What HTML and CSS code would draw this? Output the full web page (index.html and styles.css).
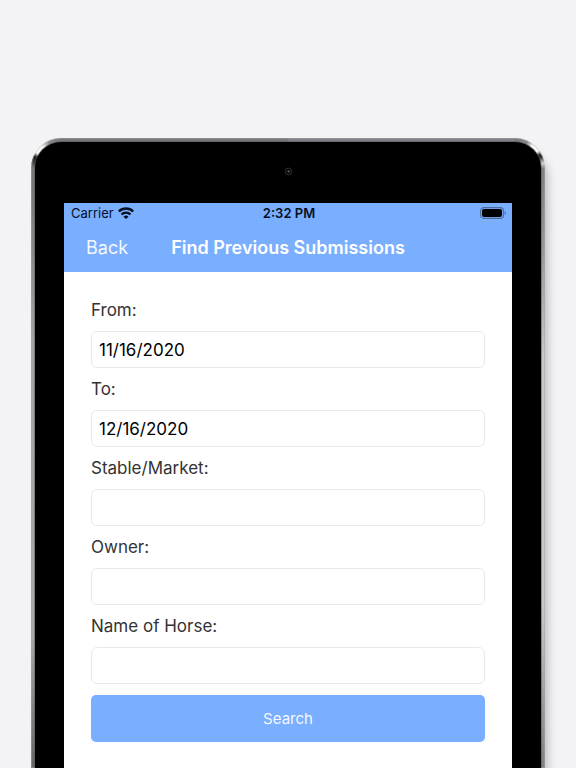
FILE: index.html
```html
<!DOCTYPE html>
<html lang="en">
<head>
<meta charset="utf-8">
<meta name="viewport" content="width=device-width, initial-scale=1">
<title>Find Previous Submissions</title>
<link rel="stylesheet" href="styles.css">
</head>
<body>
<div class="tablet">
  <div class="bezel">
    <div class="camera-row">
      <svg width="9" height="9" viewBox="0 0 9 9" aria-hidden="true">
        <circle cx="4.5" cy="4.5" r="3.4" fill="#08090a" stroke="#2b2c30"/>
        <circle cx="4.5" cy="4.5" r="1.4" fill="#25272b"/>
        <circle cx="4.8" cy="4.4" r=".6" fill="#85888e"/>
      </svg>
    </div>
    <main class="screen">
      <header class="header">
        <div class="status">
          <div class="carrier">
            <span>Carrier</span>
            <svg width="16" height="12" viewBox="0 0 16 12" aria-hidden="true">
              <g fill="none" stroke="#06101f" stroke-width="2.3">
                <path d="M.8 4.5a10.2 10.2 0 0 1 14.4 0"/>
                <path d="M3.5 7.5a6.4 6.4 0 0 1 9 0"/>
              </g>
              <path d="M8 12 5.5 9.7a3.7 3.7 0 0 1 5 0z" fill="#06101f"/>
            </svg>
          </div>
          <span class="time">2:32 PM</span>
          <svg class="battery" width="27" height="12" viewBox="0 0 27 12" aria-hidden="true">
            <rect x=".6" y=".6" width="22.8" height="10.8" rx="3.2" fill="none" stroke="#4c6b9d" stroke-width="1.1"/>
            <rect x="2" y="2" width="20" height="8" rx="2" fill="#000"/>
            <path d="M24.7 4.1c1.6.6 1.6 3.2 0 3.8z" fill="#4c6b9d"/>
          </svg>
        </div>
        <nav class="navbar">
          <a class="back" href="#">Back</a>
          <h1 class="title">Find Previous Submissions</h1>
        </nav>
      </header>
      <form class="form">
        <label class="label" for="from">From:</label>
        <input class="field" id="from" type="text" value="11/16/2020">
        <label class="label" for="to">To:</label>
        <input class="field" id="to" type="text" value="12/16/2020">
        <label class="label" for="stable">Stable/Market:</label>
        <input class="field" id="stable" type="text">
        <label class="label" for="owner">Owner:</label>
        <input class="field" id="owner" type="text">
        <label class="label" for="horse">Name of Horse:</label>
        <input class="field" id="horse" type="text">
        <button class="search" type="button">Search</button>
      </form>
    </main>
  </div>
</div>
</body>
</html>
```
FILE: styles.css
```css
* {
  box-sizing: border-box;
}

body {
  margin: 0;
  min-height: 100vh;
  padding: 138px 31px 0;
  display: flex;
  flex-direction: column;
  overflow-x: hidden;
  background: #f3f3f5;
  font-family: Inter, "Liberation Sans", sans-serif;
}

.tablet {
  flex: 1;
  display: flex;
  flex-direction: column;
  padding: 4px 4px 0;
  border-radius: 30px 30px 0 0;
  background:
    conic-gradient(from 270deg at 100% 100%, #77777b 0deg, #222 18deg, #222 24deg, #fff 32deg, #fff 48deg, #88888c 65deg, #77777b 90deg, transparent 90deg) left top / 30px 30px no-repeat,
    conic-gradient(at 0 100%, #77777b 0deg, #88888c 25deg, #fff 38deg, #fff 54deg, #222 62deg, #333 68deg, #ddd 80deg, #88868c 90deg, transparent 90deg) right top / 30px 30px no-repeat,
    linear-gradient(#828086 40px, #9c9aa0 120px, #c8c8cc 220px, #c8c8cc 470px, #807e84 100%) right top / 50% 100% no-repeat,
    linear-gradient(#77777b 0, #77777b 50px, #a4a4a6 200px, #a8a8aa 500px, #66666a 100%);
  box-shadow: 5px 10px 9px -2px #bcbcc0, inset 0 0 0 1px #a4a4a880;
}

.bezel {
  flex: 1;
  display: flex;
  flex-direction: column;
  padding: 0 29px;
  border-radius: 26px 26px 0 0;
  background: #000;
  box-shadow: 0 0 0 1px #55535a80;
}

.camera-row {
  height: 61px;
  padding-bottom: 2px;
  display: flex;
  align-items: center;
  justify-content: center;
}

.screen {
  flex: 1;
  background: #fff;
}

.header {
  height: 69px;
  background: #7aaeff;
}

.status {
  height: 20px;
  padding: 0 5px 0 7px;
  display: grid;
  grid-template-columns: 1fr auto 1fr;
  align-items: center;
  color: #06101f;
  font-size: 13px;
  line-height: 20px;
}

.carrier {
  display: flex;
  align-items: center;
  gap: 4px;
}

.time {
  font-weight: 600;
}

.battery {
  justify-self: end;
}

.navbar {
  height: 49px;
  padding: 0 22px;
  display: grid;
  grid-template-columns: 1fr auto 1fr;
  align-items: center;
  color: #fff;
}

.back {
  color: #f4f8ff;
  font-size: 18px;
  text-decoration: none;
}

.title {
  margin: 0;
  font-size: 18px;
  font-weight: 600;
}

.form {
  padding: 25px 27px 24px;
  display: flex;
  flex-direction: column;
}

.label {
  margin-bottom: 7px;
  color: #333;
  font-size: 17px;
  line-height: 27px;
}

.field {
  width: 100%;
  height: 37px;
  margin: 0 0 8px;
  padding: 0 7px;
  border: 1px solid #e9e9eb;
  border-radius: 6px;
  background: #fff;
  color: #000;
  font: 17px Inter, "Liberation Sans", sans-serif;
}

.search {
  height: 47px;
  margin: 3px 0 0;
  border: 0;
  border-radius: 5px;
  background: #7aaeff;
  color: #f4f8ff;
  font: 15px Inter, "Liberation Sans", sans-serif;
}
```
